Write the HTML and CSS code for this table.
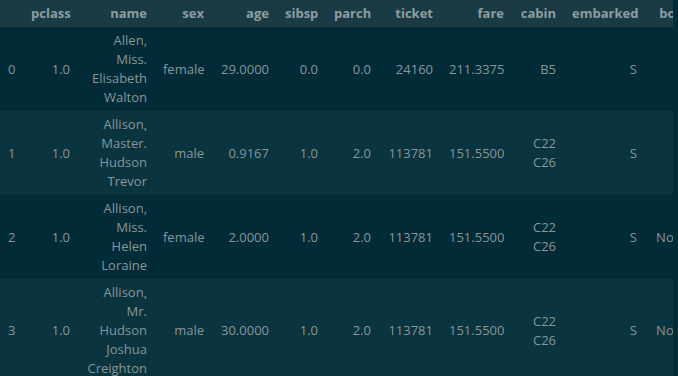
FILE: index.html
```html
<!DOCTYPE html>
<html>
<head>
<meta charset="utf-8">
<link rel="stylesheet" href="styles.css">
</head>
<body>
<div class="frame">
<table class="df">
<colgroup>
<col class="c-idx"><col class="c-pclass"><col class="c-name"><col class="c-sex"><col class="c-age"><col class="c-sibsp"><col class="c-parch"><col class="c-ticket"><col class="c-fare"><col class="c-cabin"><col class="c-emb"><col class="c-boat"><col class="c-body">
</colgroup>
<thead>
<tr><th></th><th>pclass</th><th>name</th><th>sex</th><th>age</th><th>sibsp</th><th>parch</th><th>ticket</th><th>fare</th><th>cabin</th><th>embarked</th><th>boat</th><th>body</th></tr>
</thead>
<tbody>
<tr class="even"><th>0</th><td>1.0</td><td>Allen, Miss. Elisabeth Walton</td><td>female</td><td>29.0000</td><td>0.0</td><td>0.0</td><td>24160</td><td>211.3375</td><td>B5</td><td>S</td><td></td><td></td></tr>
<tr class="odd"><th>1</th><td>1.0</td><td>Allison, Master. Hudson Trevor</td><td>male</td><td>0.9167</td><td>1.0</td><td>2.0</td><td>113781</td><td>151.5500</td><td>C22 C26</td><td>S</td><td></td><td></td></tr>
<tr class="even"><th>2</th><td>1.0</td><td>Allison, Miss. Helen Loraine</td><td>female</td><td>2.0000</td><td>1.0</td><td>2.0</td><td>113781</td><td>151.5500</td><td>C22 C26</td><td>S</td><td>None</td><td>NaN</td></tr>
<tr class="odd"><th>3</th><td>1.0</td><td>Allison, Mr. Hudson Joshua Creighton</td><td>male</td><td>30.0000</td><td>1.0</td><td>2.0</td><td>113781</td><td>151.5500</td><td>C22 C26</td><td>S</td><td>None</td><td>135.0</td></tr>
</tbody>
</table>
</div>
</body>
</html>
```
FILE: styles.css
```css
html, body {
  margin: 0;
  padding: 0;
  background: #012b37;
}
.frame {
  width: 673px;
  overflow: hidden;
}
.df {
  border-collapse: collapse;
  border-spacing: 0;
  table-layout: fixed;
  width: 753px;
  font-family: "Open Sans", "Liberation Sans", sans-serif;
  font-size: 13px;
  line-height: 19px;
  color: #87979a;
}
.c-idx { width: 23px; }
.c-pclass { width: 55px; }
.c-name { width: 77px; }
.c-sex { width: 57px; }
.c-age { width: 65px; }
.c-sibsp { width: 49px; }
.c-parch { width: 53px; }
.c-ticket { width: 62px; }
.c-fare { width: 71px; }
.c-cabin { width: 52px; }
.c-emb { width: 81px; }
.c-boat { width: 52px; }
.c-body { width: 56px; }
.df th, .df td {
  padding: 4px 8px;
  text-align: right;
  vertical-align: middle;
  white-space: normal;
}
.df thead th {
  background: #1a3b43;
  font-weight: 700;
  color: #8d9da0;
}
.df tbody th {
  font-weight: 400;
  text-align: left;
}
.df tr.even { background: #012b37; }
.df tr.odd { background: #0a343e; }
```
